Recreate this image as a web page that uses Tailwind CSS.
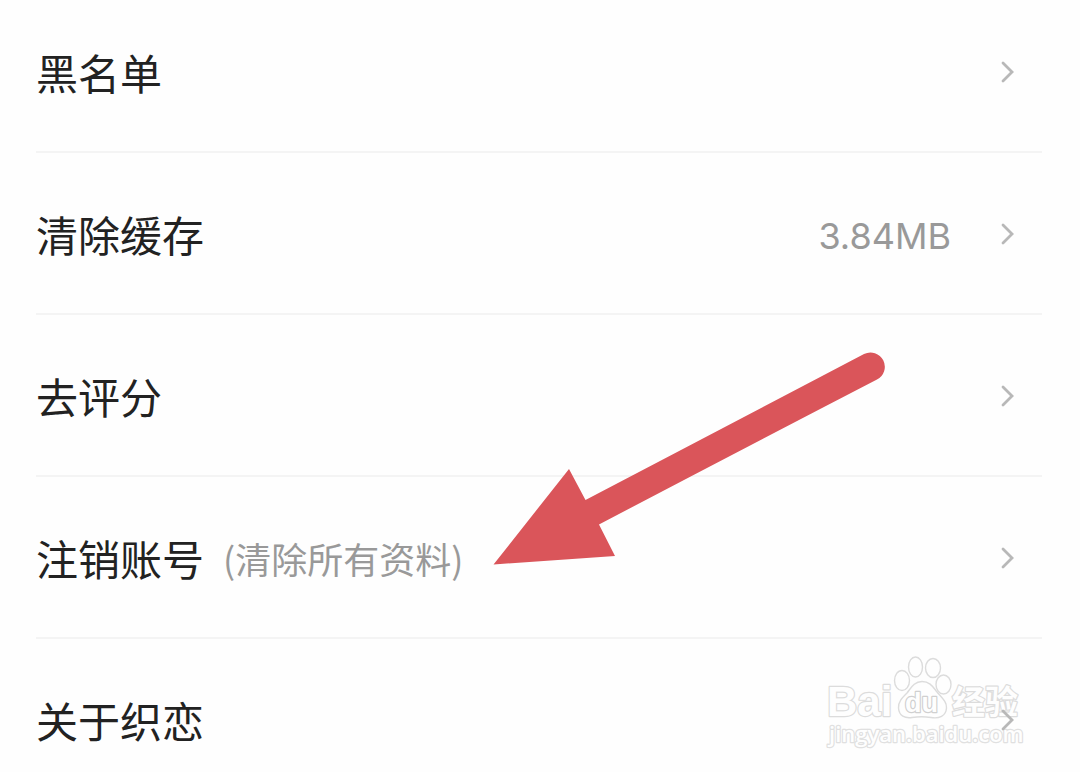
<!DOCTYPE html>
<html lang="zh-CN">
<head>
    <meta charset="UTF-8">
    <meta name="viewport" content="width=device-width, initial-scale=1.0">
    <title>设置</title>
    <script src="https://cdn.jsdelivr.net/npm/@tailwindcss/browser@4"></script>
</head>
<body class="relative bg-[#fefefe] text-[#222222] font-['Noto_Sans_CJK_SC','Liberation_Sans',sans-serif] overflow-x-hidden">

    <svg class="hidden">
        <symbol id="chevron" viewBox="0 0 14 22">
            <path d="M2 2 L11 11 L2 20" fill="none" stroke="#b8b8b8" stroke-width="2.800" stroke-linecap="round" stroke-linejoin="miter" />
        </symbol>
    </svg>

    <ul class="pl-9 pr-[38px] text-[42px] leading-[62px]">
        <li class="border-b-2 border-[#f4f4f4]">
            <a href="#blacklist" class="flex items-center pt-[41px] pb-12 pr-[27px]">
                <span class="grow">黑名单</span>
                <svg class="w-[14px] h-[22px]"><use href="#chevron" /></svg>
            </a>
        </li>
        <li class="border-b-2 border-[#f4f4f4]">
            <a href="#cache" class="flex items-center pt-[50px] pb-12 pr-[27px]">
                <span class="grow">清除缓存</span>
                <span class="mr-[50px] text-4xl leading-[58px] pt-1 text-[#999999] font-['Inter',sans-serif]">3.84MB</span>
                <svg class="w-[14px] h-[22px]"><use href="#chevron" /></svg>
            </a>
        </li>
        <li class="border-b-2 border-[#f4f4f4]">
            <a href="#rate" class="flex items-center pt-[50px] pb-12 pr-[27px]">
                <span class="grow">去评分</span>
                <svg class="w-[14px] h-[22px]"><use href="#chevron" /></svg>
            </a>
        </li>
        <li class="border-b-2 border-[#f4f4f4]">
            <a href="#delete-account" class="flex items-center pt-[50px] pb-12 pr-[27px]">
                <span>注销账号</span>
                <span class="grow ml-[19px] text-4xl text-[#999999]">(清除所有资料)</span>
                <svg class="w-[14px] h-[22px]"><use href="#chevron" /></svg>
            </a>
        </li>
        <li>
            <a href="#about" class="flex items-center pt-[50px] pb-5 pr-[27px]">
                <span class="grow">关于织恋</span>
                <svg class="w-[14px] h-[22px]"><use href="#chevron" /></svg>
            </a>
        </li>
    </ul>

    <!-- arrow pointing at the delete account row -->
    <svg class="absolute left-[490px] top-[348px] w-[400px] h-[222px] pointer-events-none" viewBox="490 348 400 222" fill="#da555a">
        <path d="M493.500 564.500 L569 469 L585.500 500 Q725 427 864 354 A14 14 0 0 1 877 379.500 Q739 451 599 524.500 L615 556 Z" />
    </svg>

    <!-- watermark, sits behind the rows -->
    <svg class="absolute -z-10 left-[822px] top-[650px] w-[206px] h-[104px] pointer-events-none" viewBox="822 650 206 104" fill="#fefefe" stroke="#dcdcdc" stroke-width="1.400" stroke-linejoin="round">
        <ellipse cx="902" cy="680.500" rx="7.500" ry="10" />
        <ellipse cx="915.500" cy="667" rx="7" ry="10" />
        <ellipse cx="933" cy="668" rx="7.500" ry="9.500" />
        <ellipse cx="943.500" cy="684.500" rx="7.500" ry="9.500" />
        <path d="M922 681.500 C914 681.500 911 688 907 693 C902 698 898 702 898.500 708 C899 716 905 718.500 912 717.500 C919 716.500 924 716.500 931 717.500 C939 719 946 716 946.500 708 C947 702 942 698 937 692 C933 687 930 681.500 922 681.500 Z" />
        <g paint-order="stroke" stroke-width="2.400">
            <text x="827" y="716" font-size="42" class="font-['Liberation_Sans',sans-serif] font-bold">Bai</text>
            <text x="905" y="712" font-size="27" stroke="#d0d0d0" class="font-['Liberation_Sans',sans-serif] font-bold">du</text>
            <text x="952" y="714" font-size="33" class="font-['Noto_Sans_CJK_SC',sans-serif] font-bold">经验</text>
            <text x="829" y="742" font-size="22" stroke="#e0e0e0" class="font-['Open_Sans',sans-serif] font-semibold">jingyan.baidu.com</text>
        </g>
    </svg>

</body>
</html>
